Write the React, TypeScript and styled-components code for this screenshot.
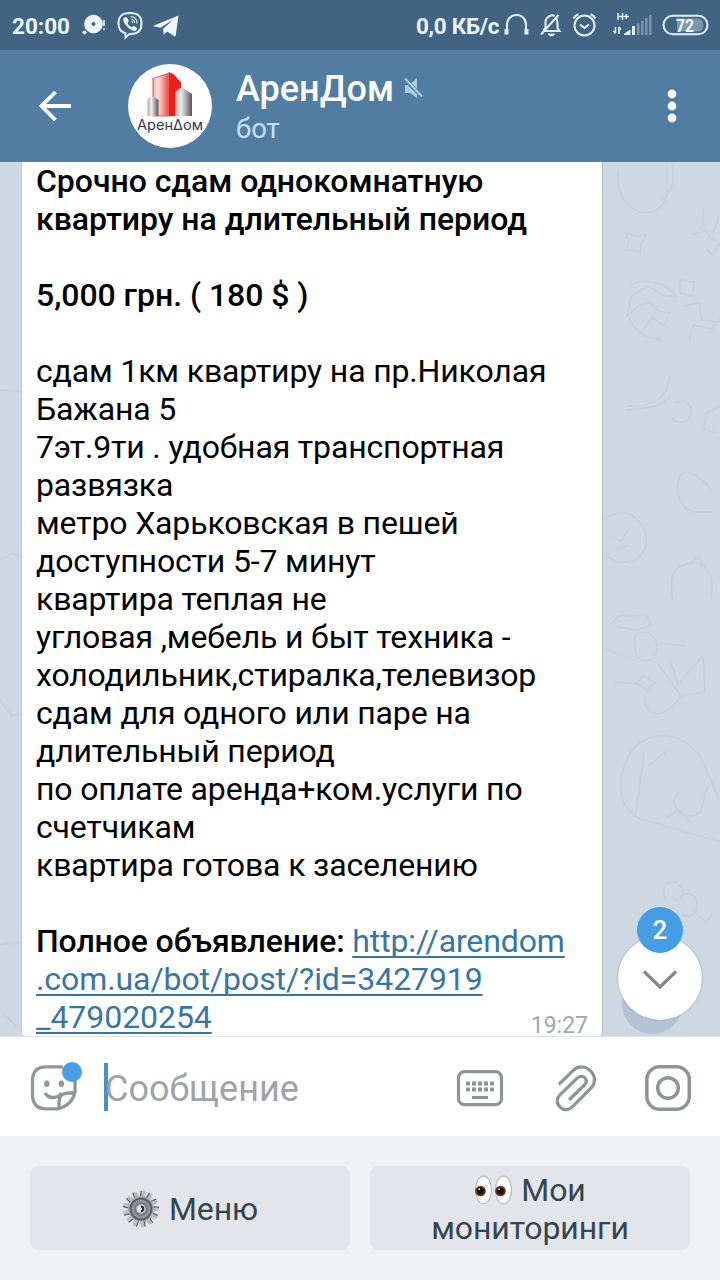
import React from 'react';
import styled, { createGlobalStyle } from 'styled-components';

const GlobalStyle = createGlobalStyle`
  * { box-sizing: border-box; }
  body { margin: 0; font-family: Roboto, "Noto Sans", sans-serif; }
  svg { display: block; flex: none; }
`;

const Screen = styled.div`
  width: 720px;
  height: 1280px;
  display: flex;
  flex-direction: column;
  overflow: hidden;
  background: #fff;
`;

const StatusBar = styled.div`
  height: 50px;
  flex: none;
  display: flex;
  align-items: center;
  padding: 2px 10px 0 12px;
  background: #426482;
  color: #e9f4fc;
  font-size: 22.5px;
  font-weight: 700;
`;

const Clock = styled.span`
  width: 68px;
  white-space: nowrap;
`;

const Speed = styled.span`
  margin-left: auto;
  width: 87px;
  white-space: nowrap;
  letter-spacing: -0.3px;
`;

const Header = styled.header`
  height: 112px;
  flex: none;
  display: flex;
  align-items: center;
  padding: 0 28px 0 36px;
  background: #517da2;
`;

const Avatar = styled.div`
  margin-left: 54px;
  width: 84px;
  height: 84px;
  border-radius: 50%;
  overflow: hidden;
  background: #fff;
`;

const Heading = styled.div`
  margin-left: 24px;
  padding-top: 3px;
  flex: 1;
`;

const Title = styled.div`
  display: flex;
  align-items: center;
  gap: 10px;
  height: 42px;
  color: #fff;
  font-size: 36px;
  font-weight: 500;
`;

const Subtitle = styled.div`
  height: 38px;
  line-height: 38px;
  color: #c4e0f7;
  font-size: 27.5px;
`;

const Chat = styled.main`
  position: relative;
  height: 874px;
  flex: none;
  padding-left: 21px;
  background: #cdd8e2;
`;

const Wallpaper = styled.svg`
  position: absolute;
  inset: 0;
`;

const Bubble = styled.article`
  position: relative;
  width: 582px;
  height: 874px;
  padding: 0 14px 0;
  background: #fff;
  border-left: 1px solid #c1cad4;
  border-right: 1px solid #b3bdc9;
  border-radius: 0 0 4px 4px;
  color: #000;
`;

const Line = styled.div<{ $bold?: boolean; $track?: number }>`
  height: 38px;
  line-height: 38px;
  font-size: 32px;
  white-space: pre;
  font-weight: ${(p) => (p.$bold ? 500 : 400)};
  letter-spacing: ${(p) => p.$track ?? (p.$bold ? -0.04 : -0.15)}px;
`;

const Label = styled.span`
  font-weight: 500;
`;

const Link = styled.span`
  color: #3776a4;
  text-decoration: underline;
  text-decoration-thickness: 2px;
  text-underline-offset: 4px;
  text-decoration-skip-ink: none;
`;

const Time = styled.time`
  position: absolute;
  right: 14px;
  bottom: -3px;
  color: #a1a7ad;
  font-size: 23px;
  line-height: 27px;
`;

const ScrollDown = styled.button`
  position: absolute;
  left: 618px;
  top: 774px;
  width: 84px;
  height: 84px;
  padding: 0;
  border: 0;
  border-radius: 50%;
  background: #fff;
  box-shadow: 0 0 2px #8090a0;
  display: flex;
  align-items: center;
  justify-content: center;
`;

const ScrollShade = styled.div`
  position: absolute;
  left: 622px;
  top: 811px;
  width: 61px;
  height: 61px;
  border-radius: 50%;
  background: #b2c4d5;
`;

const Badge = styled.span`
  position: absolute;
  left: 19px;
  top: -29px;
  width: 46px;
  height: 46px;
  border-radius: 50%;
  background: #479de4;
  color: #fff;
  font: 500 26px/46px Roboto, sans-serif;
  text-align: center;
`;

const Composer = styled.div`
  height: 100px;
  flex: none;
  display: flex;
  align-items: center;
  padding: 3px 28px 0 28px;
  border-top: 1px solid #dfe3e5;
  background: #fff;
`;

const Caret = styled.i`
  width: 4px;
  height: 48px;
  margin: 0 -3px 2px 20px;
  background: #4b8fca;
`;

const Placeholder = styled.span`
  flex: 1;
  padding-top: 2px;
  color: #a1a4a7;
  font-size: 36px;
  line-height: 46px;
`;

const Tools = styled.div`
  display: flex;
  align-items: center;
  gap: 47px;
`;

const Keyboard = styled.div`
  flex: 1;
  display: flex;
  gap: 20px;
  padding: 30px;
  background: #f0f2f5;
`;

const Key = styled.button`
  flex: 1;
  height: 84px;
  padding: 2px 40px 0;
  border: 0;
  border-radius: 8px;
  background: #e2e6ea;
  color: #36444d;
  font: 400 32px/38px Roboto, sans-serif;
  letter-spacing: -0.1px;
  display: flex;
  flex-direction: column;
  align-items: center;
  justify-content: center;
`;

const KeyRow = styled.span<{ $gap: number }>`
  display: flex;
  align-items: center;
  gap: ${(p) => p.$gap}px;
  height: 38px;
`;

const NoticeIcons = () => (
  <svg width="100" height="34" viewBox="80 9 100 34" fill="none">
    <circle cx="93.500" cy="24" r="9.300" fill="#eef7fd" />
    <circle cx="93.500" cy="24" r="2" fill="#426482" />
    <circle cx="84.500" cy="32.500" r="2" fill="#eef7fd" />
    <path d="M104 20v6M104 28.300v1.700" stroke="#d5e6f2" strokeWidth="1.800" />
    <path d="M130 13c8 0 11.500 3 11.500 10.500S138 34 130.500 34h-1l-4 3.500v-4.300c-4.700-1.200-7-4-7-9.700C118.500 16 122 13 130 13Z" stroke="#e4f1fa" strokeWidth="2" />
    <path d="M124.500 17.500c1-1 2-.500 2.500.300l1.600 2.700c.500 1-.700 1.700-1 2.500.500 2 2 3.500 4 4.200.900-.200 1.500-1.600 2.600-1.100l2.400 1.700c1.300 1-.700 3.200-2 3.300-4.700-.500-11.500-7.500-11.300-11.500 0-.800.500-1.500 1.200-2.100Z" fill="#eef7fd" />
    <path d="M130.500 16.500c4 .2 6.500 2.500 6.500 7M131 19c2.200.2 3.500 1.500 3.600 4M131.500 21.300c.8.200 1.200.7 1.200 1.600" stroke="#dcebf6" strokeWidth="1.200" />
    <path d="M153.500 25.800 178.500 15.500 175.700 35.500c-.2 1-.9 1.200-1.800.6l-6.800-4.600-3.300 3.200-.8-5.800 10-9.100-12.600 8-6.600-1.500Z" fill="#eef7fd" />
  </svg>
);

const SystemIcons = () => (
  <svg width="207" height="34" viewBox="503 9 207 34" fill="none" stroke="#e4f1fa" strokeWidth="2">
    <path d="M507 33v-8c0-6 4-10 9.500-10s9.500 4 9.500 10v8" />
    <path d="M506.500 29v5.500M526.500 29v5.500" strokeWidth="4" />
    <path d="M543.500 31h16l-2-3v-5c0-3-.6-4.200-2-5.800M543.500 30.500l2-3v-5c0-4 2-6 5.500-7 1.300-.4 2.600 0 3.600.6M541 34.500l17.500-19.500" />
    <path d="M548 34c1.500 2.500 5 2.500 6.500 0Z" fill="#e4f1fa" strokeWidth="1" />
    <circle cx="584.500" cy="25.500" r="10" />
    <path d="m580 24.500 4.500 3.500 4.500-3.500M573.500 18.500c1-2 2.800-3.500 5-4.200M595.500 18.500c-1-2-2.800-3.500-5-4.200" />
    <path d="M618 13v7M622.500 13v7M618 16.500h4.500M623.500 16.500h5.500M626.300 14v5" strokeWidth="1.500" />
    <path d="M615.500 27v6m-2-2 2 2.500M619 34v-7m0 0 2 2.500" strokeWidth="1.500" />
    <path d="M624 34.500 630 30v4.500Z" fill="#eef7fd" strokeWidth="1" />
    <path d="M633.500 35v-9" strokeWidth="3" />
    <path d="M638.200 35V23.500M642.300 35V21M646.300 35V18M650.300 35V15" stroke="#7b95ac" strokeWidth="2.400" />
    <rect x="663.500" y="15.800" width="44" height="18.500" rx="9.200" />
    <path d="M677 18.500h21c7 0 7 13 0 13h-21Z" fill="#7e97ad" stroke="none" />
    <text x="685" y="31.500" textAnchor="middle" fill="#f1f9ff" stroke="none" fontFamily="Roboto, sans-serif" fontSize="18" textLength="18" lengthAdjust="spacingAndGlyphs" fontWeight="700">72</text>
  </svg>
);

const BackIcon = () => (
  <svg width="38" height="36" viewBox="0 0 38 36" fill="none" stroke="#fff" strokeWidth="3.800">
    <path d="M35 18H6M19.500 4 5.500 18l14 14" />
  </svg>
);

const LogoArt = () => (
  <svg width="84" height="84" viewBox="0 0 84 84">
    <defs>
      <linearGradient id="red">
        <stop offset="0" stopColor="#f3a9a3" />
        <stop offset=".3" stopColor="#fbe3df" />
        <stop offset="1" stopColor="#f6433e" />
      </linearGradient>
      <linearGradient id="grey">
        <stop offset="0" stopColor="#aaa" />
        <stop offset=".35" stopColor="#eee" />
        <stop offset="1" stopColor="#555" />
      </linearGradient>
    </defs>
    <path d="M25 14.500 41 9v43H25Z" fill="url(#red)" stroke="#d8716c" strokeWidth="1.200" />
    <path d="m41 8 5 2.500 7 8v7.500l-6 4v22h-6Z" fill="#f21d1b" />
    <path d="M19.500 36c1-3 4-4 6-3.500l5 3.500v16h-11Z" fill="url(#grey)" />
    <path d="M47 29c2-4 5-5.500 8-5l9 6v22H47Z" fill="url(#grey)" />
    <text x="9" y="66" textLength="66" lengthAdjust="spacingAndGlyphs" fontFamily="Inter, sans-serif" fontSize="14" fill="#303350">АренΔом</text>
  </svg>
);

const MutedIcon = () => (
  <svg width="20" height="24" viewBox="0 0 20 24">
    <path d="M1 8h4.500L13 1v20L6 16H1Z" fill="#a9cbea" />
    <path d="m-1 1 21 20" stroke="#517da2" strokeWidth="4" />
    <path d="m1 1.500 17 18" stroke="#a9cbea" strokeWidth="2" />
  </svg>
);

const MoreIcon = () => (
  <svg width="40" height="40" viewBox="0 0 40 40" fill="#fff">
    <circle cx="20" cy="8" r="4.400" />
    <circle cx="20" cy="20" r="4.400" />
    <circle cx="20" cy="32" r="4.400" />
  </svg>
);

const Doodles = () => (
  <Wallpaper width="720" height="874" viewBox="0 162 720 874" fill="none" stroke="#bfc1d4" strokeWidth="1.300" opacity=".42">
    <path d="M618 171c-2 20 6 35 22 41 14 3 26-5 27-22v-24M672 166c4 15-1 26-9 34M625 233l4 9-4 9 8-2 7 4 1-9 5-9-10 1ZM704 208c-4 14 0 24 10 24l5-17M692 235l13-4 11 11M707 250l5 5 8-11" />
    <path d="M631 286c10-9 34-5 46 11l-14-2-16-9-16 11-4 19 12-10 10-4 9 9 12 2-6 13-12-9-9 13M629 318c5 12 18 22 32 21M680 280l14 2-2 14-12-3ZM684 306l15-3 3 17 18 2M689 340l5-15 18 4 8-10" />
    <path d="M628 406c15 2 30-3 38-15l4-16M627 410l30-4 14-9M674 403c12-6 20 3 16 13-4 9-16 8-18 1M720 406l-14 8-2 14 12 5" />
    <path d="M680 475c8-8 20 3 32 14M680 475c-5 16-3 33 15 37h17M605 520c12-13 31-8 39 9 9 24-9 35-27 33l-15-8M608 536l13 5 9-14M615 550l14-5M673 600c-5-26 1-34 18-37 16-1 24 13 20 35M690 563l9-6 3 9" />
    <path d="M611 624l8-8 28-1 4 10-14 5-20-3M635 635c12-8 25 3 22 17-4 13-21 11-22-2ZM605 649l30 11M660 643l25 3M670 660l8 24 25-28 2 36-24 4-23-32M615 682l22 2 10 6 8-7-12-7-7 8ZM645 695c-2 25 22 24 35 2" />
    <path d="M632 750c22-25 61-15 73 16l13 31M632 750c-12 20-20 52 6 68l82 24M644 752l-8 61M647 767l20-16M679 792c-10 11-2 23 11 24 18 0 11-21 18-29M666 818l13-8 13 13" />
    <path d="M665 898c-5-14 7-22 15-12 10 9-2 18-8 10M680 898c5-8 17-4 17 6 1 9-7 15-16 10M697 914l9 8 6-8M0 390l22 2M0 560l13-7 9 5M0 700l12 16 10-3M0 945l22-3M4 1015l14 12" />
  </Wallpaper>
);

const StickerIcon = () => (
  <svg width="56" height="52" viewBox="28 1062 56 52" fill="none" stroke="#929597" strokeWidth="3.300">
    <path d="M63 1066.800H46c-9 0-13.500 5-13.500 13.500v14c0 10 5 14.500 13.500 14.500h11c10-2 16-8 18-17v-14M59 1108v-6c0-6 4-9 9-9h7" />
    <path d="M45 1093c4 6 12 6 17 0" />
    <ellipse cx="46.800" cy="1083.700" rx="2.700" ry="3.300" fill="#929597" stroke="none" />
    <ellipse cx="61.300" cy="1083.700" rx="2.700" ry="3.300" fill="#929597" stroke="none" />
    <circle cx="72" cy="1072" r="10" fill="#479fe8" stroke="none" />
  </svg>
);

const KeyboardIcon = () => (
  <svg width="48" height="48" viewBox="0 0 48 48" fill="none" stroke="#919496" strokeWidth="3.200">
    <rect x="2.500" y="7.700" width="43" height="33" rx="6" />
    <path d="M10 19.500h28M10 25.500h28" strokeWidth="4" strokeDasharray="4 2" />
    <path d="M16 33.500h16" strokeWidth="3" />
  </svg>
);

const ClipIcon = () => (
  <svg width="46" height="48" viewBox="551 1064 46 48" fill="none" stroke="#919496" strokeWidth="3.200">
    <path d="m558.800 1084.500 14.500-14.200c5-4.500 12-4.500 17 .4 5.500 5.500 5.500 12.500.7 17.500l-18.500 18.500c-4 4-9 3.500-12.300.5-4.200-4-3.700-9 0-12.500l17-16.500c2.500-2.500 5.500-2.500 7.500-.5s2.200 4.800-.2 7.300l-15.500 15" />
  </svg>
);

const CameraIcon = () => (
  <svg width="48" height="48" viewBox="0 0 48 48" fill="none" stroke="#919496" strokeWidth="3.500">
    <rect x="2.800" y="2.800" width="42.500" height="42.500" rx="13" />
    <circle cx="24" cy="24" r="10.300" />
  </svg>
);

const GearIcon = () => (
  <svg width="38" height="38" viewBox="-19 -19 38 38">
    {Array.from({ length: 13 }, (_, i) => (
      <g key={i} transform={`rotate(${(i * 360) / 13 + 8})`}>
        <path d="M-3-11-1.500-18h3L3-11Z" fill="#b9bcc5" />
        <path d="M-2.600-12c1-2-.3-3.500.6-6" fill="none" stroke="#555b64" strokeWidth="1.200" />
      </g>
    ))}
    <circle r="12.800" fill="#acb0ba" />
    <circle r="10.500" fill="#92959e" stroke="#5c5f68" strokeWidth="2" />
    <circle r="6" fill="#b7b9c4" stroke="#777983" strokeWidth="2" />
    <circle r="3.600" fill="#e3e4ed" />
    <path d="M0-2.500c3 .5 3 4 0 5" fill="none" stroke="#24262c" strokeWidth="2" />
  </svg>
);

const EyesIcon = () => (
  <svg width="38" height="30" viewBox="0 0 38 30">
    {[0, 20].map((x) => (
      <g key={x} transform={`translate(${x} 0)`}>
        <ellipse cx="9.500" cy="15" rx="8" ry="13.800" fill="#fff" stroke="#bbb9b7" strokeWidth="1.200" />
        <circle cx="6.500" cy="16" r="5.300" fill="#5b3517" />
        <circle cx="6.500" cy="16" r="3.300" fill="#1d0d06" />
        <circle cx="5.200" cy="14.300" r="1" fill="#e9d6c9" />
      </g>
    ))}
  </svg>
);

const body = [
  'сдам 1км квартиру на пр.Николая',
  'Бажана 5',
  '7эт.9ти . удобная транспортная',
  'развязка',
  'метро Харьковская в пешей',
  'доступности 5-7 минут',
  'квартира теплая не',
  'угловая ,мебель и быт техника -',
  'холодильник,стиралка,телевизор',
  'сдам для одного или паре на',
  'длительный период',
  'по оплате аренда+ком.услуги по',
  'счетчикам',
  'квартира готова к заселению',
];

export default function App() {
  return (
    <Screen>
      <GlobalStyle />
      <StatusBar>
        <Clock>20:00</Clock>
        <NoticeIcons />
        <Speed>0,0 КБ/с</Speed>
        <SystemIcons />
      </StatusBar>
      <Header>
        <BackIcon />
        <Avatar><LogoArt /></Avatar>
        <Heading>
          <Title>АренДом<MutedIcon /></Title>
          <Subtitle>бот</Subtitle>
        </Heading>
        <MoreIcon />
      </Header>
      <Chat>
        <Doodles />
        <Bubble>
          <Line $bold>Срочно сдам однокомнатную</Line>
          <Line $bold>квартиру на длительный период</Line>
          <Line />
          <Line $bold>5,000 грн. ( 180 $ )</Line>
          <Line />
          {body.map((text) => <Line key={text}>{text}</Line>)}
          <Line />
          <Line $track={-0.12}><Label>Полное объявление:</Label> <Link>http://arendom</Link></Line>
          <Line $track={-0.08}><Link>.com.ua/bot/post/?id=3427919</Link></Line>
          <Line $track={-0.05}><Link>_479020254</Link></Line>
          <Time>19:27</Time>
        </Bubble>
        <ScrollShade />
        <ScrollDown>
          <svg width="36" height="22" viewBox="0 -2 36 22" fill="none" stroke="#858789" strokeWidth="3.300">
            <path d="m2 2.500 16 15.500 16-15.500" />
          </svg>
          <Badge>2</Badge>
        </ScrollDown>
      </Chat>
      <Composer>
        <StickerIcon />
        <Caret />
        <Placeholder>Сообщение</Placeholder>
        <Tools>
          <KeyboardIcon />
          <ClipIcon />
          <CameraIcon />
        </Tools>
      </Composer>
      <Keyboard>
        <Key><KeyRow $gap={9}><GearIcon />Меню</KeyRow></Key>
        <Key>
          <KeyRow $gap={9}><EyesIcon />Мои</KeyRow>
          <KeyRow $gap={0}>мониторинги</KeyRow>
        </Key>
      </Keyboard>
    </Screen>
  );
}
